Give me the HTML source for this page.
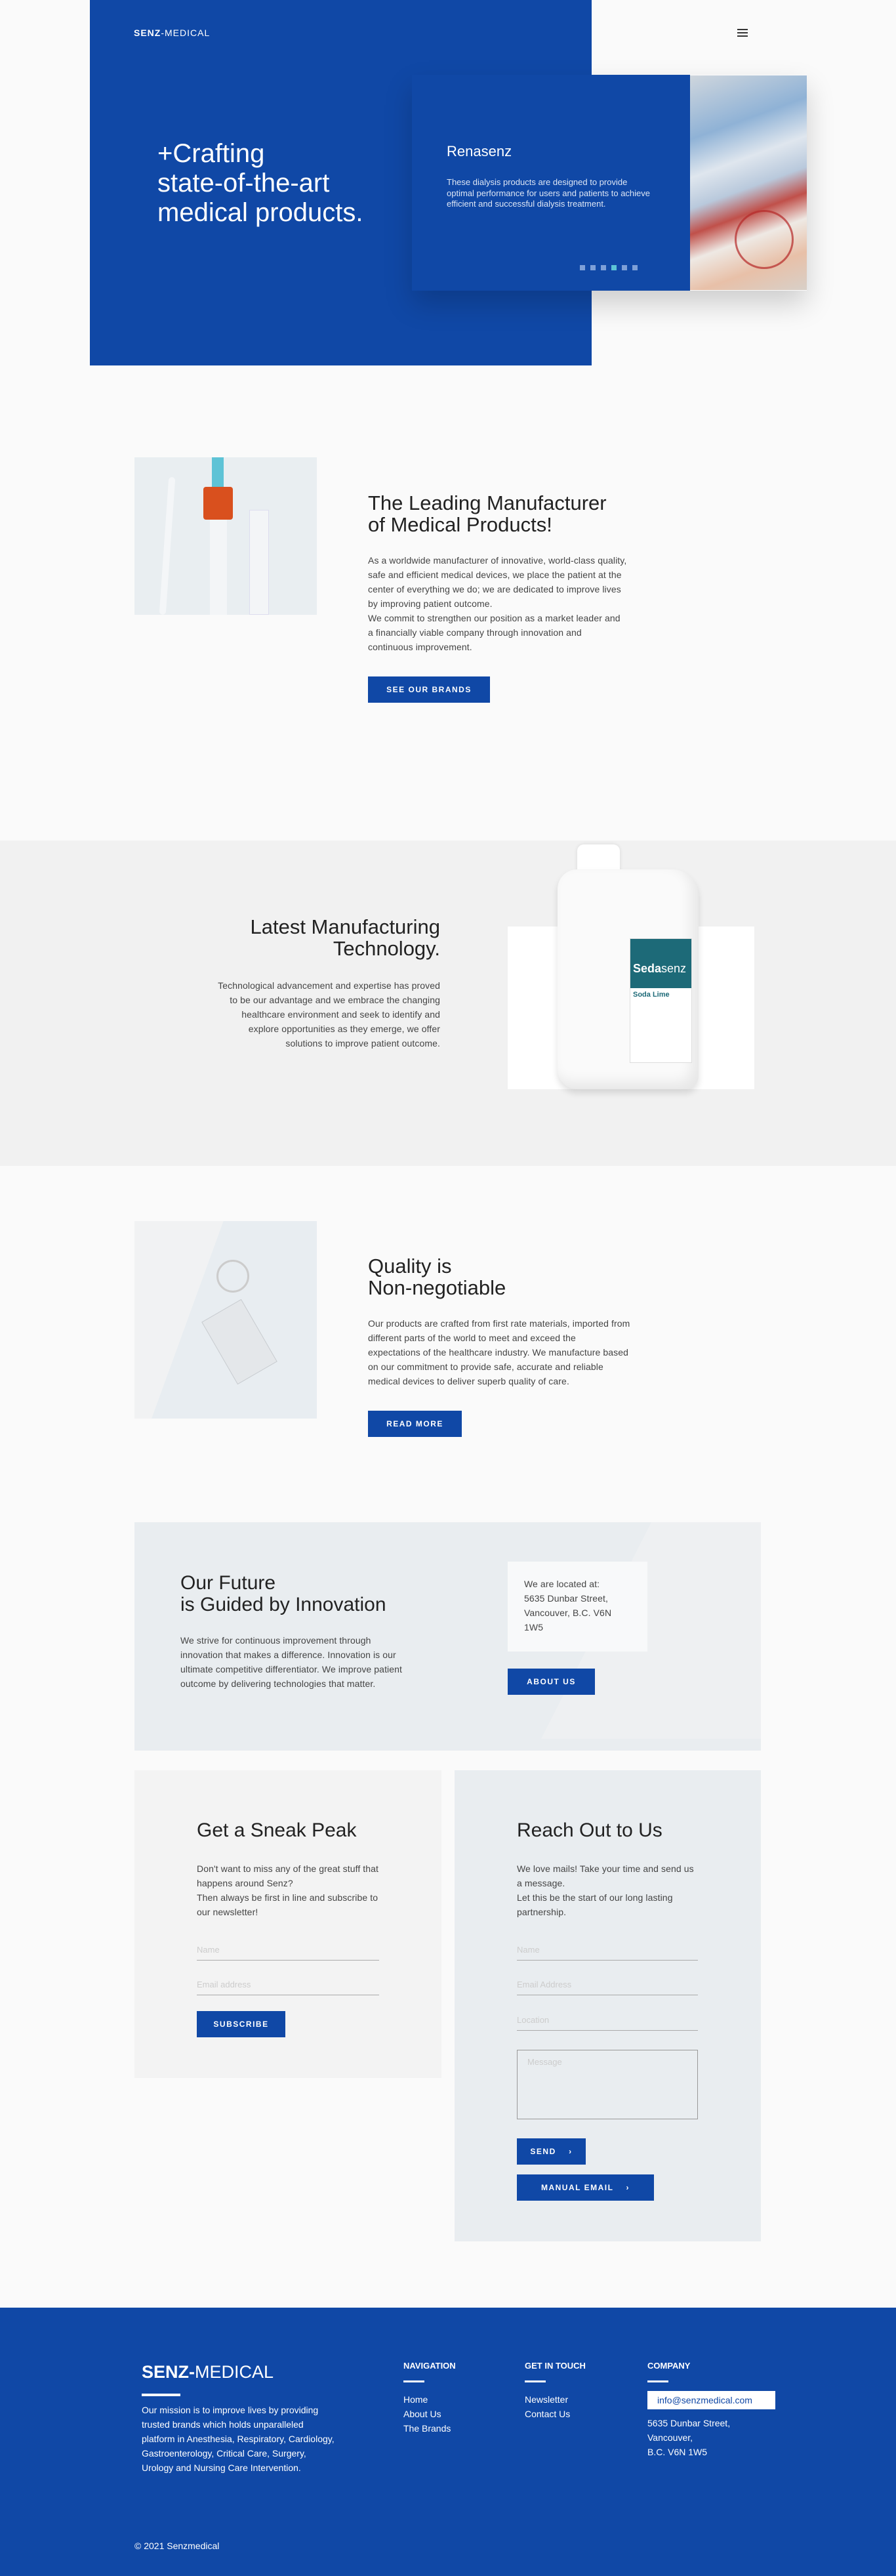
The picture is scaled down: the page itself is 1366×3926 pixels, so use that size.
<!DOCTYPE html>
<html><head><meta charset="utf-8">
<style>
*{margin:0;padding:0;box-sizing:border-box}
body{width:1366px;height:3926px;background:#fafafa;font-family:"Liberation Sans",sans-serif;color:#333;position:relative;overflow:hidden}
.a{position:absolute}
.blue{background:#1048a6}
.btn{position:absolute;background:#1048a6;color:#fff;font-size:12px;letter-spacing:1.5px;font-weight:bold;display:flex;align-items:center;justify-content:center}
h2{font-weight:normal;color:#222}
.p{font-size:14px;line-height:22px;color:#444;letter-spacing:.1px}
.in{position:absolute;border-bottom:1px solid #aaa;color:#ccc;font-size:13px;height:24px}
.f{color:#fff}
</style></head><body>

<!-- HERO -->
<div class="a blue" style="left:137px;top:0;width:765px;height:557px"></div>
<div class="a f" style="left:204px;top:42px;font-size:14px;letter-spacing:1px"><b>SENZ</b>-MEDICAL</div>
<div class="a" style="left:1124px;top:44px;width:16px">
 <div style="height:2px;background:#333;margin-bottom:3px"></div><div style="height:2px;background:#333;margin-bottom:3px"></div><div style="height:2px;background:#333"></div></div>
<div class="a f" style="left:240px;top:212px;font-size:40px;line-height:45px;font-weight:300">+Crafting<br>state-of-the-art<br>medical products.</div>
<div class="a" style="left:628px;top:114px;width:602px;height:329px;box-shadow:0 20px 40px rgba(0,0,0,.18)"></div>
<div class="a blue" style="left:628px;top:114px;width:424px;height:329px"></div>
<div class="a" style="left:1052px;top:115px;width:178px;height:327px;background:linear-gradient(160deg,#cfd6dd 0%,#8fb2d6 25%,#dfe6ee 40%,#b9c9dc 52%,#c0504a 62%,#eee9e4 72%,#e8c0a8 85%,#d8d0c8 100%)"></div>
<div class="a" style="left:1120px;top:320px;width:90px;height:90px;border-radius:50%;border:3px solid #b52828;opacity:.7"></div>
<div class="a f" style="left:681px;top:218px;font-size:22px">Renasenz</div>
<div class="a" style="left:681px;top:270px;width:320px;font-size:13px;line-height:16.5px;color:#dde6f5">These dialysis products are designed to provide optimal performance for users and patients to achieve efficient and successful dialysis treatment.</div>
<div class="a" style="left:884px;top:404px;display:flex;gap:8px">
<span style="width:8px;height:8px;background:#7ea0d8"></span><span style="width:8px;height:8px;background:#7ea0d8"></span><span style="width:8px;height:8px;background:#7ea0d8"></span><span style="width:8px;height:8px;background:#5cc5d6"></span><span style="width:8px;height:8px;background:#7ea0d8"></span><span style="width:8px;height:8px;background:#7ea0d8"></span></div>

<!-- SECTION 2 -->
<div class="a" style="left:205px;top:697px;width:278px;height:240px;background:#e9eef1;overflow:hidden">
 <div class="a" style="left:45px;top:30px;width:10px;height:210px;background:#f4f6f8;border-radius:5px;transform:rotate(4deg)"></div>
 <div class="a" style="left:118px;top:0;width:18px;height:60px;background:#5ec3d6"></div>
 <div class="a" style="left:105px;top:45px;width:45px;height:50px;background:#d9501e;border-radius:4px"></div>
 <div class="a" style="left:115px;top:95px;width:26px;height:145px;background:#f3f5f7"></div>
 <div class="a" style="left:175px;top:80px;width:30px;height:160px;background:#f3f5f7;border:1px solid #dde"></div>
</div>
<h2 class="a" style="left:561px;top:750px;font-size:31px;line-height:33px">The Leading Manufacturer<br>of Medical Products!</h2>
<div class="a p" style="left:561px;top:843px;width:395px">As a worldwide manufacturer of innovative, world-class quality, safe and efficient medical devices, we place the patient at the center of everything we do; we are dedicated to improve lives by improving patient outcome.<br>We commit to strengthen our position as a market leader and a financially viable company through innovation and continuous improvement.</div>
<div class="btn" style="left:561px;top:1031px;width:186px;height:40px">SEE OUR BRANDS</div>

<!-- SECTION 3 -->
<div class="a" style="left:0;top:1281px;width:1366px;height:496px;background:#f1f1f1"></div>
<h2 class="a" style="left:300px;top:1396px;width:371px;text-align:right;font-size:31px;line-height:33px">Latest Manufacturing<br>Technology.</h2>
<div class="a p" style="left:320px;top:1491px;width:351px;text-align:right">Technological advancement and expertise has proved to be our advantage and we embrace the changing healthcare environment and seek to identify and explore opportunities as they emerge, we offer solutions to improve patient outcome.</div>
<div class="a" style="left:774px;top:1412px;width:376px;height:248px;background:#fff"></div>
<div class="a" style="left:880px;top:1287px;width:65px;height:45px;background:#fff;border-radius:10px 10px 0 0;box-shadow:0 0 6px rgba(0,0,0,.1)"></div>
<div class="a" style="left:850px;top:1325px;width:215px;height:335px;background:#fafafa;border-radius:30px 40px 20px 30px;box-shadow:inset -10px -10px 20px rgba(0,0,0,.08),0 6px 10px rgba(0,0,0,.12)"></div>
<div class="a" style="left:960px;top:1430px;width:95px;height:190px;background:#fff;border:1px solid #ddd">
 <div style="height:75px;background:#1d6a78;color:#fff;font-size:18px;font-weight:bold;padding:35px 4px 0">Seda<span style="font-weight:normal">senz</span></div>
 <div style="font-size:11px;font-weight:bold;color:#1d6a78;padding:4px">Soda Lime</div>
</div>

<!-- SECTION 4 -->
<div class="a" style="left:205px;top:1861px;width:278px;height:301px;background:linear-gradient(110deg,#f1f2f3 35%,#e8edf1 35%)"></div>
<div class="a" style="left:330px;top:1920px;width:50px;height:50px;border:3px solid #ccc;border-radius:50%"></div>
<div class="a" style="left:330px;top:1990px;width:70px;height:110px;background:#e4e7ea;border:1px solid #c8ccd0;transform:rotate(-30deg)"></div>
<h2 class="a" style="left:561px;top:1913px;font-size:31px;line-height:33px">Quality is<br>Non-negotiable</h2>
<div class="a p" style="left:561px;top:2006px;width:400px">Our products are crafted from first rate materials, imported from different parts of the world to meet and exceed the expectations of the healthcare industry. We manufacture based on our commitment to provide safe, accurate and reliable medical devices to deliver superb quality of care.</div>
<div class="btn" style="left:561px;top:2150px;width:143px;height:40px">READ MORE</div>

<!-- SECTION 5 -->
<div class="a" style="left:205px;top:2320px;width:955px;height:348px;background:#e9edf0;overflow:hidden">
 <div class="a" style="left:620px;top:0;width:400px;height:330px;background:#eef0f2;clip-path:polygon(42% 0,100% 0,100% 100%,0 100%)"></div>
</div>
<h2 class="a" style="left:275px;top:2396px;font-size:30px;line-height:33px">Our Future<br>is Guided by Innovation</h2>
<div class="a p" style="left:275px;top:2489px;width:355px">We strive for continuous improvement through innovation that makes a difference. Innovation is our ultimate competitive differentiator. We improve patient outcome by delivering technologies that matter.</div>
<div class="a p" style="left:774px;top:2380px;width:213px;height:137px;background:#f8f9fa;padding:23px 25px">We are located at:<br>5635 Dunbar Street, Vancouver, B.C. V6N 1W5</div>
<div class="btn" style="left:774px;top:2543px;width:133px;height:40px">ABOUT US</div>

<!-- SECTION 6 -->
<div class="a" style="left:205px;top:2698px;width:468px;height:469px;background:#f3f3f3"></div>
<div class="a" style="left:693px;top:2698px;width:467px;height:718px;background:#e9edf0"></div>
<h2 class="a" style="left:300px;top:2773px;font-size:30px">Get a Sneak Peak</h2>
<div class="a p" style="left:300px;top:2837px;width:285px">Don't want to miss any of the great stuff that happens around Senz?<br>Then always be first in line and subscribe to our newsletter!</div>
<div class="in" style="left:300px;top:2964px;width:278px">Name</div>
<div class="in" style="left:300px;top:3017px;width:278px">Email address</div>
<div class="btn" style="left:300px;top:3065px;width:135px;height:40px">SUBSCRIBE</div>
<h2 class="a" style="left:788px;top:2773px;font-size:30px">Reach Out to Us</h2>
<div class="a p" style="left:788px;top:2837px;width:280px">We love mails! Take your time and send us a message.<br>Let this be the start of our long lasting partnership.</div>
<div class="in" style="left:788px;top:2964px;width:276px">Name</div>
<div class="in" style="left:788px;top:3017px;width:276px">Email Address</div>
<div class="in" style="left:788px;top:3071px;width:276px">Location</div>
<div class="a" style="left:788px;top:3124px;width:276px;height:106px;border:1px solid #999;color:#ccc;font-size:13px;padding:10px 15px">Message</div>
<div class="btn" style="left:788px;top:3259px;width:105px;height:40px">SEND &nbsp;&nbsp;&nbsp;›</div>
<div class="btn" style="left:788px;top:3314px;width:209px;height:40px">MANUAL EMAIL &nbsp;&nbsp;&nbsp;›</div>

<!-- FOOTER -->
<div class="a blue" style="left:0;top:3517px;width:1366px;height:409px"></div>
<div class="a f" style="left:216px;top:3600px;font-size:27px"><b>SENZ-</b>MEDICAL</div>
<div class="a" style="left:216px;top:3648px;width:59px;height:4px;background:#fff"></div>
<div class="a f" style="left:216px;top:3662px;width:300px;font-size:14px;line-height:22px">Our mission is to improve lives by providing trusted brands which holds unparalleled platform in Anesthesia, Respiratory, Cardiology, Gastroenterology, Critical Care, Surgery, Urology and Nursing Care Intervention.</div>
<div class="a f" style="left:615px;top:3598px;font-size:13px;font-weight:bold">NAVIGATION</div>
<div class="a f" style="left:800px;top:3598px;font-size:13px;font-weight:bold">GET IN TOUCH</div>
<div class="a f" style="left:987px;top:3598px;font-size:13px;font-weight:bold">COMPANY</div>
<div class="a" style="left:615px;top:3628px;width:32px;height:3px;background:#fff"></div>
<div class="a" style="left:800px;top:3628px;width:32px;height:3px;background:#fff"></div>
<div class="a" style="left:987px;top:3628px;width:32px;height:3px;background:#fff"></div>
<div class="a f" style="left:615px;top:3646px;font-size:14px;line-height:22px">Home<br>About Us<br>The Brands</div>
<div class="a f" style="left:800px;top:3646px;font-size:14px;line-height:22px">Newsletter<br>Contact Us</div>
<div class="a" style="left:987px;top:3644px;width:195px;height:28px;background:#fff;color:#1048a6;font-size:14px;padding:6px 15px">info@senzmedical.com</div>
<div class="a f" style="left:987px;top:3682px;font-size:14px;line-height:22px">5635 Dunbar Street,<br>Vancouver,<br>B.C. V6N 1W5</div>
<div class="a f" style="left:205px;top:3872px;font-size:14px">© 2021 Senzmedical</div>
</body></html>
